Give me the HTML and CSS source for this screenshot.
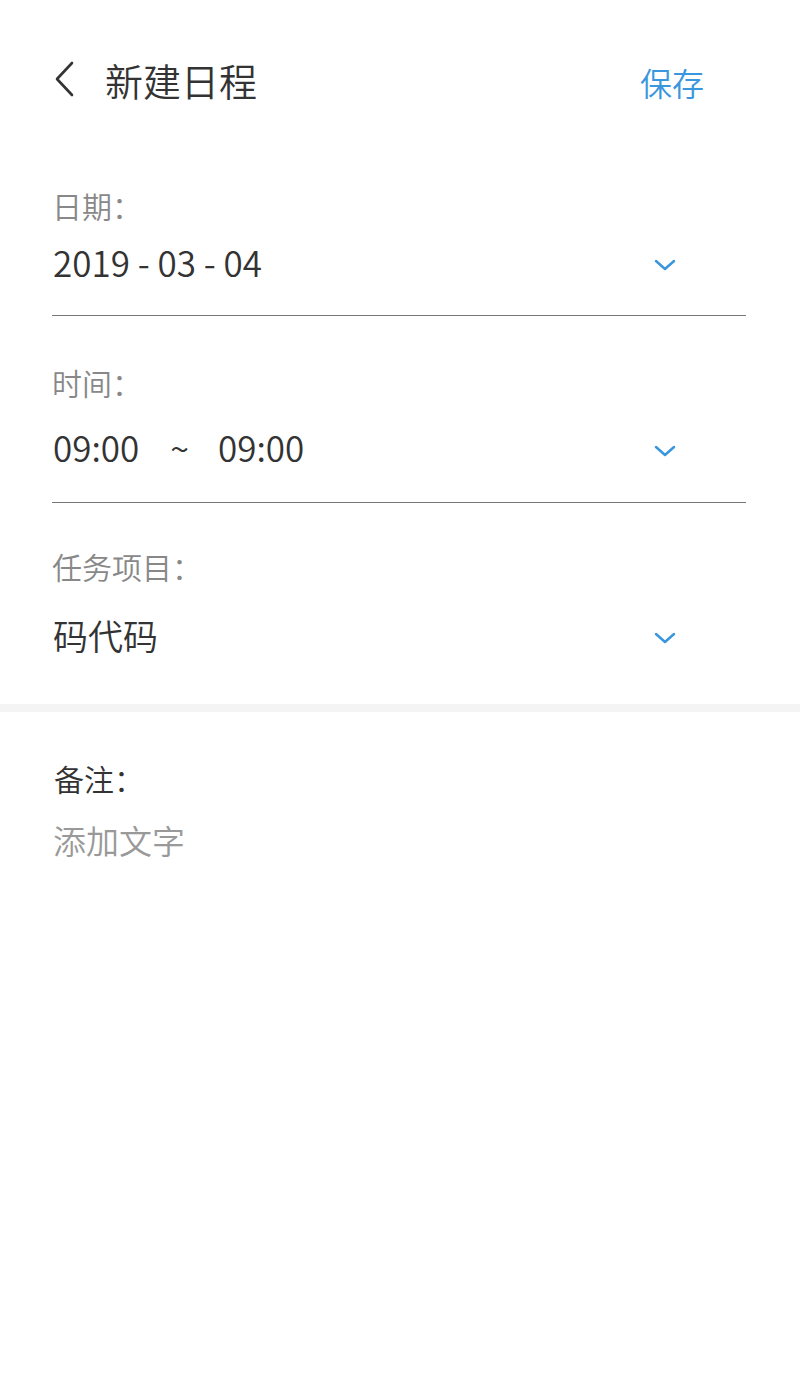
FILE: index.html
```html
<!DOCTYPE html>
<html lang="zh-CN">
<head>
  <meta charset="UTF-8">
  <meta name="viewport" content="width=device-width, initial-scale=1.0">
  <title>新建日程</title>
  <link rel="stylesheet" href="styles.css">
</head>
<body>
  <header class="topbar">
    <div class="topbar-left">
      <svg class="back-icon" width="22" height="36" viewBox="0 0 22 36">
        <path d="M19 2 L4 18 L19 34" fill="none" stroke="#333" stroke-width="2.6" stroke-linecap="round" stroke-linejoin="round"/>
      </svg>
      <h1 class="title">新建日程</h1>
    </div>
    <a class="save" href="#">保存</a>
  </header>

  <form class="schedule-form">
    <div class="field field-first">
      <div class="field-label">日期：</div>
      <div class="field-row">
        <span class="field-value">2019 - 03 - 04</span>
        <svg class="drop-icon" width="22" height="12" viewBox="0 0 22 12">
          <path d="M2 2 L11 10 L20 2" fill="none" stroke="#3a96dd" stroke-width="2.5" stroke-linecap="round" stroke-linejoin="round"/>
        </svg>
      </div>
    </div>

    <div class="field">
      <div class="field-label">时间：</div>
      <div class="field-row">
        <span class="field-value">09:00<span class="tilde">~</span>09:00</span>
        <svg class="drop-icon" width="22" height="12" viewBox="0 0 22 12">
          <path d="M2 2 L11 10 L20 2" fill="none" stroke="#3a96dd" stroke-width="2.5" stroke-linecap="round" stroke-linejoin="round"/>
        </svg>
      </div>
    </div>

    <div class="field field-last">
      <div class="field-label">任务项目：</div>
      <div class="field-row">
        <span class="field-value">码代码</span>
        <svg class="drop-icon" width="22" height="12" viewBox="0 0 22 12">
          <path d="M2 2 L11 10 L20 2" fill="none" stroke="#3a96dd" stroke-width="2.5" stroke-linecap="round" stroke-linejoin="round"/>
        </svg>
      </div>
    </div>
  </form>

  <section class="notes">
    <div class="notes-label">备注：</div>
    <div class="notes-placeholder">添加文字</div>
  </section>
</body>
</html>
```

FILE: styles.css
```css
body {
  margin: 0;
  background-color: #fff;
  font-family: "Noto Sans CJK SC", "Noto Sans", sans-serif;
  font-weight: 350;
  color: #333;
}
.topbar {
  height: 160px;
  display: flex;
  align-items: center;
  justify-content: space-between;
  padding: 0 95px 0 53px;
}
.topbar-left {
  display: flex;
  align-items: center;
}
.back-icon {
  display: block;
  margin-top: -2px;
}
.title {
  margin: 0 0 0 30px;
  font-size: 38px;
  font-weight: 350;
  line-height: 50px;
  color: #333;
}
.save {
  font-size: 32px;
  line-height: 44px;
  color: #3a96dd;
  text-decoration: none;
  margin-top: 4px;
  margin-right: 1px;
}
.schedule-form {
  padding: 0 54px 0 52px;
}
.field {
  padding: 46px 0 29px;
  border-bottom: 1px solid #777;
}
.field-first {
  padding-top: 25px;
  padding-bottom: 28px;
}
.field-last {
  border-bottom: none;
  padding-top: 43px;
  padding-bottom: 44px;
}
.field-label {
  font-size: 30px;
  line-height: 40px;
  color: #888;
}
.field-row {
  display: flex;
  align-items: center;
  justify-content: space-between;
  margin-top: 20px;
}
.field-first .field-row {
  margin-top: 12px;
}
.field-last .field-row {
  margin-top: 24px;
}
.field-value {
  font-size: 35px;
  line-height: 50px;
  color: #333;
  padding-left: 1px;
}
.tilde {
  margin: 0 29px 0 31px;
  font-size: 34px;
}
.drop-icon {
  display: block;
  margin-right: 70px;
  margin-top: 6px;
}
.notes {
  border-top: 8px solid #f4f4f4;
  padding: 46px 52px 0;
}
.notes-label {
  font-size: 30px;
  line-height: 40px;
  color: #333;
  padding-left: 2px;
}
.notes-placeholder {
  margin-top: 20px;
  font-size: 33px;
  line-height: 44px;
  color: #999;
  padding-left: 1px;
}
```
